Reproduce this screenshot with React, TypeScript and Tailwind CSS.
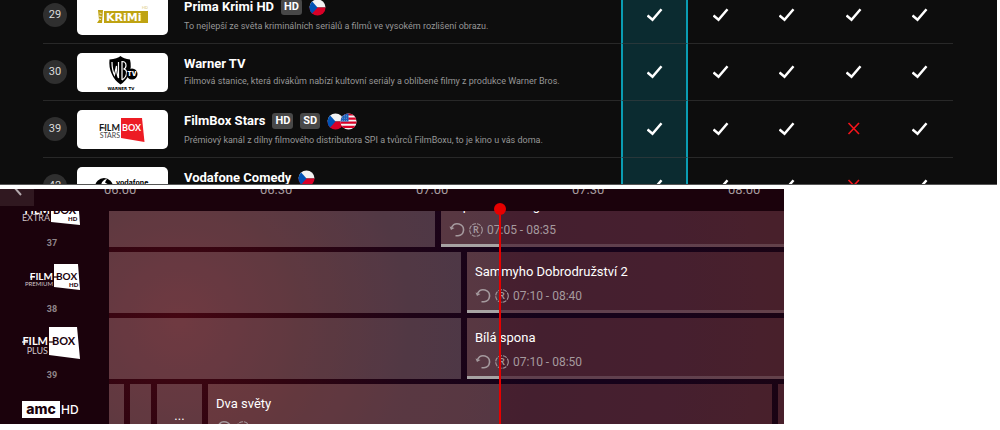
import React from "react";

type Flag = "cz" | "us";

type Channel = {
  number: number;
  name: string;
  text: string;
  quality: string[];
  flags: Flag[];
  logo: React.ReactNode;
  packages: boolean[];
};

function CzFlag() {
  return (
    <svg viewBox="0 0 18 18" className="size-[17px]" role="img" aria-label="CZ">
      <clipPath id="round">
        <circle cx="9" cy="9" r="8.5" />
      </clipPath>
      <g clipPath="url(#round)">
        <rect width="18" height="9" fill="#f2f2f2" />
        <rect y="9" width="18" height="9" fill="#d80027" />
        <path d="M2 1 L9 9 L2 17 L0 18 V0 Z" fill="#0052b4" />
      </g>
    </svg>
  );
}

function UsFlag() {
  return (
    <svg viewBox="0 0 18 18" className="-ml-1 size-[17px]" role="img" aria-label="US">
      <clipPath id="roundUs">
        <circle cx="9" cy="9" r="8.5" />
      </clipPath>
      <g clipPath="url(#roundUs)">
        <rect width="18" height="18" fill="#f5f5f5" />
        <path d="M0 1.5H18M0 6H18M0 10.2H18M0 14.7H18" stroke="#d80027" strokeWidth="2.3" />
        <rect width="9" height="9" fill="#1c5fb8" />
        <path d="M2 3H9M2 5.5H9M2 8H9" stroke="#8fb4de" strokeWidth=".8" strokeDasharray="1 1.2" />
      </g>
    </svg>
  );
}

function KrimiLogo() {
  return (
    <svg viewBox="0 0 91 39" className="h-[39px] w-[91px]">
      <rect x="27" y="15" width="44" height="12" fill="#bfa312" />
      <path d="M21 14h5l-1 13h-5l2-3z" fill="#bfa312" />
      <path d="M22.500 17l2 .5M22 20l2.500 .5M22 23l2 .5" stroke="#fff" strokeWidth=".8" />
      <text x="29" y="25" fill="#fff" fontSize="11" fontWeight="700" fontFamily="DejaVu Sans, sans-serif">KRiMi</text>
      <text x="65" y="13" fill="#d8c66a" fontSize="4" fontFamily="Inter, sans-serif">HD</text>
    </svg>
  );
}

function WarnerLogo() {
  return (
    <svg viewBox="0 0 91 39" className="h-[39px] w-[91px]">
      <path d="M43.500 3q3 2.500 9.500 3.500q2 8-1 15q-3 6.500-8.500 10q-6-4-8.500-10q-3.500-7-2.500-15q8-1 11-3.500z" fill="#000" />
      <path d="M35 9q0 8 2.500 13l2-9q0 8 2 12V9M45 27V8.500q4 0 4 4q0 3-2.500 3.500q3.500 .5 3 4.500q-.5 4-4.500 6.500" fill="none" stroke="#fff" strokeWidth="1.200" />
      <circle cx="55" cy="21" r="5.500" fill="#000" />
      <text x="55" y="23" textAnchor="middle" fill="#fff" fontSize="6" fontWeight="900" fontFamily="Inter, sans-serif">TV</text>
      <text x="44" y="37" textAnchor="middle" fill="#000" fontSize="4" fontWeight="700" fontFamily="DejaVu Sans, sans-serif">WARNER TV</text>
    </svg>
  );
}

function StarsLogo() {
  return (
    <svg viewBox="0 0 91 39" className="h-[39px] w-[91px]">
      <path d="M44 8H65L67.500 32L44 28Z" fill="#ed1c24" />
      <text x="43" y="21" textAnchor="end" fill="#1a1a1a" fontSize="9" fontWeight="700" fontFamily="Lato, sans-serif">FILM</text>
      <path d="M23 18H28" stroke="#1a1a1a" strokeWidth="1" />
      <text x="45" y="21" fill="#fff" fontSize="9" fontWeight="700" fontFamily="Lato, sans-serif">BOX</text>
      <text x="43" y="28" textAnchor="end" fill="#444" fontSize="7" fontFamily="Lato, sans-serif">STARS</text>
    </svg>
  );
}

function VodafoneLogo() {
  return (
    <svg viewBox="0 0 91 39" className="h-[39px] w-[91px]">
      <circle cx="27" cy="20" r="9" fill="#000" />
      <path d="M30 12q-6 1-6 8a4 4 0 0 0 8 0q0-3-3.500-4q-1-1 1.500-4z" fill="#fff" />
      <text x="39" y="18" fill="#000" fontSize="7" fontWeight="700" fontFamily="Inter, sans-serif">vodafone</text>
    </svg>
  );
}

const channels: Channel[] = [
  {
    number: 29,
    name: "Prima Krimi HD",
    text: "To nejlepší ze světa kriminálních seriálů a filmů ve vysokém rozlišení obrazu.",
    quality: ["HD"],
    flags: ["cz"],
    logo: <KrimiLogo />,
    packages: [true, true, true, true, true],
  },
  {
    number: 30,
    name: "Warner TV",
    text: "Filmová stanice, která divákům nabízí kultovní seriály a oblíbené filmy z produkce Warner Bros.",
    quality: [],
    flags: [],
    logo: <WarnerLogo />,
    packages: [true, true, true, true, true],
  },
  {
    number: 39,
    name: "FilmBox Stars",
    text: "Prémiový kanál z dílny filmového distributora SPI a tvůrců FilmBoxu, to je kino u vás doma.",
    quality: ["HD", "SD"],
    flags: ["cz", "us"],
    logo: <StarsLogo />,
    packages: [true, true, true, false, true],
  },
  {
    number: 42,
    name: "Vodafone Comedy",
    text: "",
    quality: [],
    flags: ["cz"],
    logo: <VodafoneLogo />,
    packages: [true, true, true, false, true],
  },
];

function Mark({ on }: { on: boolean }) {
  if (on) {
    return (
      <svg viewBox="0 0 16 14" className="mx-auto h-[14px] w-4" role="img" aria-label="Ano">
        <path d="M.5 7.500L5.500 11.800L14.500 1.200" fill="none" stroke="#fff" strokeWidth="2.500" />
      </svg>
    );
  }
  return (
    <svg viewBox="0 0 16 14" className="mx-auto h-[14px] w-4" role="img" aria-label="Ne">
      <path d="M2.500 1L13 12M13 1L2.500 12" fill="none" stroke="#f5141b" strokeWidth="1.600" />
    </svg>
  );
}

function ChannelRow({ channel }: { channel: Channel }) {
  return (
    <tr className="h-[57px]">
      <td className="border-b border-[#282828] p-0">
        <span className="flex size-6 items-center justify-center rounded-full bg-[#2f2f2f] text-[11px] text-[#dcdcdc]">
          {channel.number}
        </span>
      </td>
      <td className="border-b border-[#282828] p-0">
        <div className="w-[91px] overflow-hidden rounded-[5px] bg-white">{channel.logo}</div>
      </td>
      <td className="border-b border-[#282828] p-0 pb-px">
        <div className="flex items-center gap-[7px]">
          <h3 className="text-[13px] leading-4 font-bold whitespace-nowrap text-white">{channel.name}</h3>
          {channel.quality.map((q) => (
            <span key={q} className="rounded-[3px] bg-[#484848] px-[3px] text-[11px] leading-4 font-bold text-white">
              {q}
            </span>
          ))}
          {channel.flags.length > 0 && (
            <span className="flex h-5 items-center">
              {channel.flags.map((f) => (f === "cz" ? <CzFlag key={f} /> : <UsFlag key={f} />))}
            </span>
          )}
        </div>
        <p className="mt-[3px] min-h-3 text-[9px] leading-3 whitespace-nowrap text-[#979797]">{channel.text}</p>
      </td>
      {channel.packages.map((on, i) => (
        <td
          key={i}
          className={
            i === 0
              ? "border-x-2 border-b border-x-[#0a9db3] border-b-[#28373a] bg-[#0b2b30] p-0"
              : "border-b border-[#282828] p-0"
          }
        >
          <Mark on={on} />
        </td>
      ))}
    </tr>
  );
}

function ChannelTable() {
  return (
    <section className="mr-[3px] h-[185px] overflow-hidden border-b border-[#555] bg-[#0d0d0d] pr-11 pl-[43px]">
      <table className="-mt-[13px] w-full table-fixed border-separate border-spacing-0">
        <colgroup>
          <col className="w-[34px]" />
          <col className="w-[107px]" />
          <col />
          <col className="w-[67px]" />
          <col className="w-[66px]" />
          <col className="w-[66px]" />
          <col className="w-[67px]" />
          <col className="w-[66px]" />
        </colgroup>
        <tbody>
          {channels.map((c) => (
            <ChannelRow key={c.number} channel={c} />
          ))}
        </tbody>
      </table>
    </section>
  );
}

function ReplayIcon() {
  return (
    <svg viewBox="0 0 16 16" className="size-4">
      <path d="M2.500 5.500C4 2.500 7 1.200 10 2a6 6 0 0 1-1 11.800H6.500" fill="none" stroke="#a59a9e" strokeWidth="1.600" />
      <path d="M.5 4.500L2 8L5.500 6Z" fill="#a59a9e" />
    </svg>
  );
}

function RecordIcon() {
  return (
    <svg viewBox="0 0 16 16" className="size-4">
      <circle cx="8" cy="8" r="6.300" fill="none" stroke="#a59a9e" strokeWidth="1.100" strokeDasharray="4 1" />
      <text x="8" y="11" textAnchor="middle" fill="#a59a9e" fontSize="9" fontWeight="700" fontFamily="Lato, sans-serif">R</text>
    </svg>
  );
}

type ShowProps = {
  className: string;
  title?: string;
  time?: string;
  past?: boolean;
  elapsed?: string;
  progress?: boolean;
};

function Show({ className, title, time, past, elapsed, progress }: ShowProps) {
  return (
    <article
      className={`relative h-[61px] overflow-hidden ${past ? "bg-[#fae4dc3c]" : "bg-[#b0606050]"} ${className}`}
    >
      {elapsed && <div className={`absolute inset-y-0 left-0 bg-[#d9ffee1c] ${elapsed}`} />}
      {title && (
        <div className="relative px-2 pt-[10px]">
          <h4 className="text-[13px] leading-5 whitespace-nowrap text-white">{title}</h4>
          <div className="mt-[6px] flex items-center gap-[3px] text-xs leading-4 text-[#a59a9e]">
            <ReplayIcon />
            <RecordIcon />
            <span className="whitespace-nowrap">{time}</span>
          </div>
        </div>
      )}
      {progress && (
        <div className="absolute inset-x-0 bottom-0 h-[3px] bg-[#ffffff26]">
          <div className={`h-full bg-[#a7a3a3] ${elapsed}`} />
        </div>
      )}
    </article>
  );
}

function ExtraLogo() {
  return (
    <svg viewBox="0 0 60 33" className="h-[33px] w-[60px]" fontFamily="Lato, sans-serif">
      <path d="M29 3H56L58 31L29 28Z" fill="#fff" />
      <text x="28" y="20" textAnchor="end" fill="#fff" fontSize="11" fontWeight="700">FILM</text>
      <text x="31" y="20" fill="#1b020c" fontSize="11" fontWeight="700">BOX</text>
      <text x="28" y="27" textAnchor="end" fill="#d0c4c8" fontSize="9">EXTRA</text>
      <text x="46" y="27" fill="#1b020c" fontSize="6" fontWeight="900">HD</text>
    </svg>
  );
}

function PremiumLogo() {
  return (
    <svg viewBox="0 0 60 33" className="h-[33px] w-[60px]" fontFamily="Lato, sans-serif">
      <path d="M32 4H56L58 30L32 27Z" fill="#fff" />
      <text x="31" y="20" textAnchor="end" fill="#fff" fontSize="10" fontWeight="700">FILM</text>
      <path d="M8 17H13" stroke="#fff" strokeWidth="1.200" />
      <text x="34" y="20" fill="#1b020c" fontSize="10" fontWeight="700">BOX</text>
      <path d="M32 17H36" stroke="#1b020c" strokeWidth="1.200" />
      <text x="31" y="26" textAnchor="end" fill="#d0c4c8" fontSize="6">PREMIUM</text>
      <text x="47" y="27" fill="#1b020c" fontSize="6" fontWeight="900">HD</text>
    </svg>
  );
}

function PlusLogo() {
  return (
    <svg viewBox="0 0 60 33" className="h-[33px] w-[60px]" fontFamily="Lato, sans-serif">
      <path d="M27 1H55L58 33L27 29Z" fill="#fff" />
      <text x="26" y="19" textAnchor="end" fill="#fff" fontSize="11" fontWeight="700">FILM</text>
      <path d="M0 16H6" stroke="#fff" strokeWidth="1.200" />
      <text x="30" y="19" fill="#1b020c" fontSize="11" fontWeight="700">BOX</text>
      <path d="M27 16H32" stroke="#1b020c" strokeWidth="1.200" />
      <text x="26" y="28" textAnchor="end" fill="#d0c4c8" fontSize="9">PLUS</text>
    </svg>
  );
}

function AmcLogo() {
  return (
    <svg viewBox="0 0 60 33" className="h-[33px] w-[60px]">
      <rect y="9" width="38" height="17" fill="#fff" />
      <text x="19" y="22" textAnchor="middle" fill="#1b020c" fontSize="14" fontWeight="800" fontFamily="Inter, sans-serif">amc</text>
      <text x="39" y="22" fill="#fff" fontSize="12" fontWeight="500" fontFamily="Inter, sans-serif">HD</text>
    </svg>
  );
}

function Station({ logo, number }: { logo: React.ReactNode; number?: number }) {
  return (
    <div className="flex h-[66px] flex-col pt-2 pl-[22px]">
      {logo}
      <span className="mt-[10px] w-[60px] text-center text-[9px] leading-3 font-bold text-[#8f858a]">{number}</span>
    </div>
  );
}

const times = ["06:00", "06:30", "07:00", "07:30", "08:00"];

function Guide() {
  return (
    <section className="relative mt-1 h-[235px] w-[78.4%] overflow-hidden bg-[#1b020c]">
      <header className="flex h-[22px] items-start overflow-hidden">
        <button aria-label="Zpět" className="flex h-[17px] w-[34px] shrink-0 items-start justify-center bg-[#301820]">
          <svg viewBox="0 0 12 16" className="-mt-2 h-4 w-3">
            <path d="M3 6L10 14" fill="none" stroke="#b3a9ad" strokeWidth="2" />
          </svg>
        </button>
        <div className="-mt-[7px] ml-[70px] flex text-[13px] leading-4 text-[#a59a9e]">
          {times.map((t) => (
            <span key={t} className="w-[156px] shrink-0">
              {t}
            </span>
          ))}
        </div>
      </header>
      <div className="flex h-[213px] overflow-hidden">
        <aside className="-mt-[25px] w-[109px] shrink-0">
          <Station logo={<ExtraLogo />} number={37} />
          <Station logo={<PremiumLogo />} number={38} />
          <Station logo={<PlusLogo />} number={39} />
          <Station logo={<AmcLogo />} />
        </aside>
        <div className="min-w-0 flex-1 bg-[radial-gradient(circle_at_70px_110px,#450612_0,#300410_120px,#1e0316_230px,#14021a_360px,#16021a_480px,#1c0410_680px)]">
          <div className="-mt-[25px] flex flex-col gap-[5px]">
            <div className="flex gap-[6px]">
              <Show past className="w-[326px] shrink-0" />
              <Show className="flex-1" title="Expedice Viking" time="07:05 - 08:35" elapsed="w-[59px]" progress />
            </div>
            <div className="flex gap-[6px]">
              <Show past className="w-[352px] shrink-0" />
              <Show className="flex-1" title="Sammyho Dobrodružství 2" time="07:10 - 08:40" elapsed="w-[33px]" progress />
            </div>
            <div className="flex gap-[6px]">
              <Show past className="w-[352px] shrink-0" />
              <Show className="flex-1" title="Bílá spona" time="07:10 - 08:50" elapsed="w-[33px]" progress />
            </div>
            <div className="flex gap-[6px]">
              <Show past className="w-[15px]" />
              <Show past className="w-[21px]" />
              <div className="flex h-[61px] w-[45px] items-start justify-center bg-[#fae4dc3c] pt-6 text-[13px] leading-4 text-white">
                ...
              </div>
              <Show className="flex-1" title="Dva světy" elapsed="w-[292px]" />
              <Show className="w-[6px]" />
            </div>
          </div>
        </div>
      </div>
      <div className="absolute top-[14px] bottom-0 left-[494px] flex flex-col items-center">
        <span className="size-3 rounded-full bg-[#e60000]" />
        <span className="w-0.5 flex-1 bg-[#e60000]" />
      </div>
    </section>
  );
}

export default function App() {
  return (
    <main className="bg-white font-[Roboto,sans-serif]">
      <ChannelTable />
      <Guide />
    </main>
  );
}
